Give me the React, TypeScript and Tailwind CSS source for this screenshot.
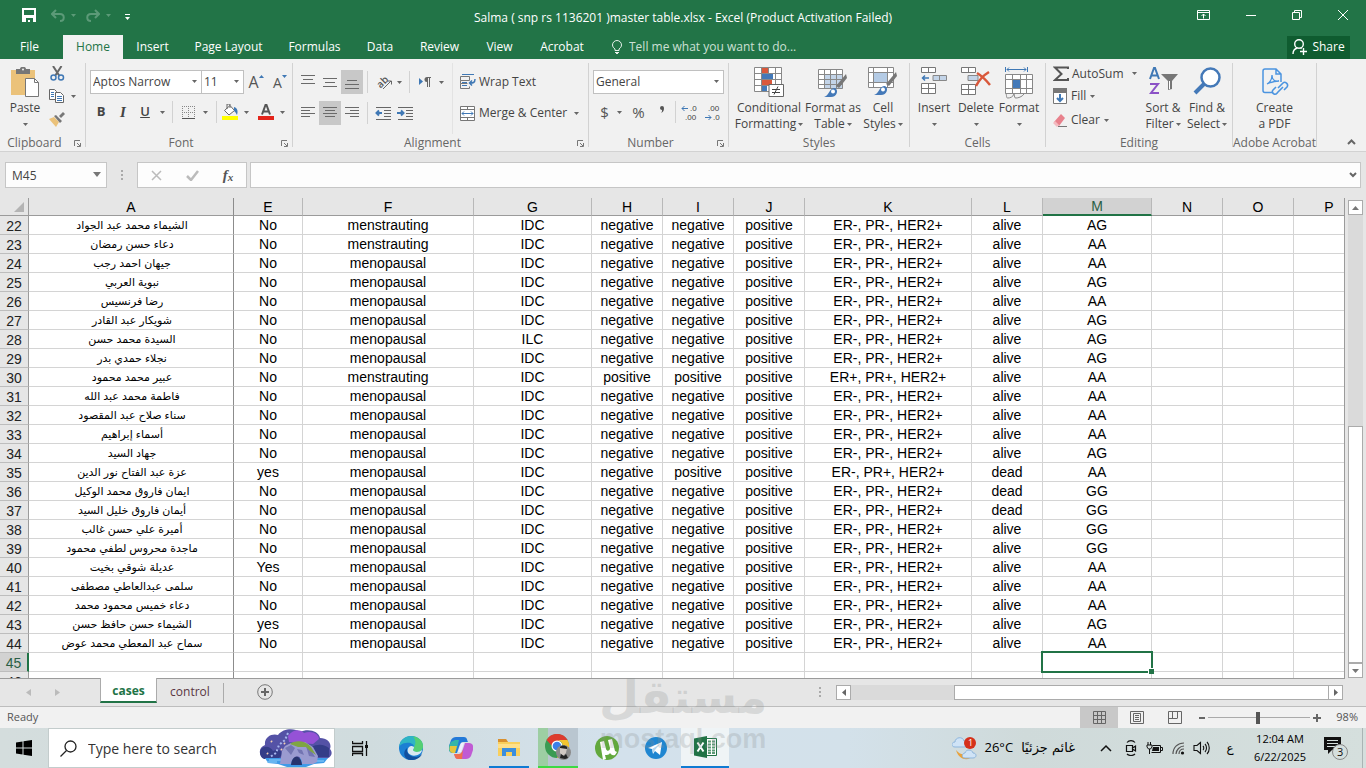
import React from 'react';
import clsx from 'clsx';

const columns = [
  { name: 'A', width: 'w-[205px]' },
  { name: 'E', width: 'w-[69px]' },
  { name: 'F', width: 'w-[171px]' },
  { name: 'G', width: 'w-[118px]' },
  { name: 'H', width: 'w-[71px]' },
  { name: 'I', width: 'w-[71px]' },
  { name: 'J', width: 'w-[71px]' },
  { name: 'K', width: 'w-[167px]' },
  { name: 'L', width: 'w-[71px]' },
  { name: 'M', width: 'w-[109px]' },
  { name: 'N', width: 'w-[71px]' },
  { name: 'O', width: 'w-[71px]' },
  { name: 'P', width: 'w-[71px]' },
];

const HER2 = 'ER-, PR-, HER2+';

// A, E, F, G, H, I, J, K, L, M
const rows: string[][] = [
  ['الشيماء محمد عبد الجواد', 'No', 'menstrauting', 'IDC', 'negative', 'negative', 'positive', HER2, 'alive', 'AG'],
  ['دعاء حسن رمضان', 'No', 'menstrauting', 'IDC', 'negative', 'negative', 'positive', HER2, 'alive', 'AA'],
  ['جيهان احمد رجب', 'No', 'menopausal', 'IDC', 'negative', 'negative', 'positive', HER2, 'alive', 'AA'],
  ['نبوية العربي', 'No', 'menopausal', 'IDC', 'negative', 'negative', 'positive', HER2, 'alive', 'AG'],
  ['رضا فرنسيس', 'No', 'menopausal', 'IDC', 'negative', 'negative', 'positive', HER2, 'alive', 'AA'],
  ['شويكار عبد القادر', 'No', 'menopausal', 'IDC', 'negative', 'negative', 'positive', HER2, 'alive', 'AG'],
  ['السيدة محمد حسن', 'No', 'menopausal', 'ILC', 'negative', 'negative', 'positive', HER2, 'alive', 'AG'],
  ['نجلاء حمدي بدر', 'No', 'menopausal', 'IDC', 'negative', 'negative', 'positive', HER2, 'alive', 'AG'],
  ['عبير محمد محمود', 'No', 'menstrauting', 'IDC', 'positive', 'positive', 'positive', 'ER+, PR+, HER2+', 'alive', 'AA'],
  ['فاطمة محمد عبد الله', 'No', 'menopausal', 'IDC', 'negative', 'negative', 'positive', HER2, 'alive', 'AA'],
  ['سناء صلاح عبد المقصود', 'No', 'menopausal', 'IDC', 'negative', 'negative', 'positive', HER2, 'alive', 'AA'],
  ['أسماء إبراهيم', 'No', 'menopausal', 'IDC', 'negative', 'negative', 'positive', HER2, 'alive', 'AA'],
  ['جهاد السيد', 'No', 'menopausal', 'IDC', 'negative', 'negative', 'positive', HER2, 'alive', 'AG'],
  ['عزة عبد الفتاح نور الدين', 'yes', 'menopausal', 'IDC', 'negative', 'positive', 'positive', 'ER-, PR+, HER2+', 'dead', 'AA'],
  ['ايمان فاروق محمد الوكيل', 'No', 'menopausal', 'IDC', 'negative', 'negative', 'positive', HER2, 'dead', 'GG'],
  ['أيمان فاروق خليل السيد', 'No', 'menopausal', 'IDC', 'negative', 'negative', 'positive', HER2, 'dead', 'GG'],
  ['أميرة علي حسن غالب', 'No', 'menopausal', 'IDC', 'negative', 'negative', 'positive', HER2, 'alive', 'GG'],
  ['ماجدة محروس لطفي محمود', 'No', 'menopausal', 'IDC', 'negative', 'negative', 'positive', HER2, 'alive', 'GG'],
  ['عديلة شوقي بخيت', 'Yes', 'menopausal', 'IDC', 'negative', 'negative', 'positive', HER2, 'alive', 'AA'],
  ['سلمى عبدالعاطي مصطفى', 'No', 'menopausal', 'IDC', 'negative', 'negative', 'positive', HER2, 'alive', 'AA'],
  ['دعاء خميس محمود محمد', 'No', 'menopausal', 'IDC', 'negative', 'negative', 'positive', HER2, 'alive', 'AA'],
  ['الشيماء حسن حافظ حسن', 'yes', 'menopausal', 'IDC', 'negative', 'negative', 'positive', HER2, 'alive', 'AG'],
  ['سماح عبد المعطي محمد عوض', 'No', 'menopausal', 'IDC', 'negative', 'negative', 'positive', HER2, 'alive', 'AA'],
  [],
  [],
];

const FIRST_ROW = 22;
const ACTIVE_ROW = 45;

interface IconProps {
  w: number;
  h: number;
  children: React.ReactNode;
}

function Icon({ w, h, children }: IconProps) {
  return (
    <svg width={w} height={h} viewBox={`0 0 ${w} ${h}`} fill="none" className="block shrink-0" aria-hidden="true">
      {children}
    </svg>
  );
}

function Caret({ color = '#666' }: { color?: string }) {
  return (
    <Icon w={5} h={3}>
      <path d="M0 0h5L2.500 3z" fill={color} />
    </Icon>
  );
}

function Btn({ label, className, children }: { label?: string; className?: string; children?: React.ReactNode }) {
  return (
    <button type="button" aria-label={label} className={clsx('flex shrink-0 items-center justify-center', className)}>
      {children}
    </button>
  );
}

function Sep() {
  return <div className="h-[22px] w-px shrink-0 bg-[#d2d2d2]" />;
}

function Group({ title, width, launcher, children }: { title: string; width: string; launcher?: boolean; children: React.ReactNode }) {
  return (
    <section className={clsx('flex h-[84px] shrink-0 flex-col border-r border-[#d2d2d2]', width)}>
      <div className="flex h-[71px] shrink-0">{children}</div>
      <div className="relative flex justify-center leading-[18px] text-[#666]">
        <span className={clsx(launcher && 'pr-4', 'whitespace-nowrap')}>{title}</span>
        {launcher && (
          <button type="button" aria-label={`${title} settings`} className="absolute right-1 top-[6px]">
            <Icon w={7} h={7}>
              <path d="M.5 6V.5H6M3 3l3 3M6.500 3v3.500H3" stroke="#777" />
            </Icon>
          </button>
        )}
      </div>
    </section>
  );
}

// Large ribbon button with the icon above one or two lines of text
function BigBtn({ icon, lines, width, caret = true }: { icon: React.ReactNode; lines: string[]; width: string; caret?: boolean }) {
  return (
    <button type="button" className={clsx('flex shrink-0 flex-col items-center pt-1 whitespace-nowrap', width)}>
      <span className="flex h-[33px] items-start">{icon}</span>
      <span className="leading-4">{lines[0]}</span>
      <span className="flex h-4 items-center gap-[2px] leading-4">
        {lines[1]}
        {caret && <Caret />}
      </span>
    </button>
  );
}

function Lines({ d }: { d: string }) {
  return (
    <Icon w={14} h={14}>
      <path d={d} stroke="#6a6a6a" />
    </Icon>
  );
}

function TitleBar() {
  return (
    <div className="grid h-[35px] grid-cols-[1fr_auto_1fr] items-center text-white">
      <div className="flex items-center pl-[22px] pb-[5px]">
        <Btn label="Save">
          <Icon w={14} h={14}>
            <path d="M0 0h14v14H0z" fill="#fff" />
            <path d="M2 2h10v5H2zM4 10h7v4H8v-2H6v2H4z" fill="#227447" />
          </Icon>
        </Btn>
        <Btn label="Undo" className="ml-[15px] gap-[6px]">
          <Icon w={14} h={13}>
            <path d="M5 1L1 5l4 4M1 5h8c5 0 5 7 0 7" stroke="#5c9a78" strokeWidth="2" />
          </Icon>
          <Caret color="#5c9a78" />
        </Btn>
        <Btn label="Redo" className="ml-[10px] gap-[6px]">
          <Icon w={14} h={13}>
            <path d="M9 1l4 4-4 4M13 5H5c-5 0-5 7 0 7" stroke="#5c9a78" strokeWidth="2" />
          </Icon>
          <Caret color="#5c9a78" />
        </Btn>
        <Btn label="Customize Quick Access Toolbar" className="ml-[14px] pt-1">
          <Icon w={5} h={6}>
            <path d="M0 0h5v1H0zM0 3h5L2.500 6z" fill="#fff" />
          </Icon>
        </Btn>
      </div>
      <h1 className="text-[12px]">Salma ( snp rs 1136201 )master table.xlsx - Excel (Product Activation Failed)</h1>
      <div className="flex items-center justify-end gap-9 pr-[18px] pb-[5px]">
        <Btn label="Ribbon Display Options">
          <Icon w={13} h={10}>
            <path d="M.5.5h12v9H.5zM.5 2.500h12M6.500 8.500V4M4.500 6l2-2 2 2" stroke="#fff" />
          </Icon>
        </Btn>
        <Btn label="Minimize">
          <Icon w={10} h={10}>
            <path d="M0 5.500h10" stroke="#fff" />
          </Icon>
        </Btn>
        <Btn label="Restore">
          <Icon w={10} h={10}>
            <path d="M.5 2.500h7v7h-7zM2.500 2V.5h7v7H8" stroke="#fff" />
          </Icon>
        </Btn>
        <Btn label="Close">
          <Icon w={10} h={10}>
            <path d="M0 0l10 10M10 0L0 10" stroke="#fff" />
          </Icon>
        </Btn>
      </div>
    </div>
  );
}

const tabs = [
  { name: 'Insert', width: 'w-[59px]' },
  { name: 'Page Layout', width: 'w-[93px]' },
  { name: 'Formulas', width: 'w-[79px]' },
  { name: 'Data', width: 'w-[52px]' },
  { name: 'Review', width: 'w-[67px]' },
  { name: 'View', width: 'w-[53px]' },
  { name: 'Acrobat', width: 'w-[72px]' },
];

function TabBar() {
  return (
    <nav className="flex h-6 items-center text-white">
      <button type="button" className="w-[63px] pr-1">File</button>
      <button type="button" className="h-6 w-[60px] bg-[#f1f1f1] text-[#227447]">Home</button>
      {tabs.map((tab) => (
        <button key={tab.name} type="button" className={clsx('shrink-0 whitespace-nowrap', tab.width)}>
          {tab.name}
        </button>
      ))}
      <label className="ml-[14px] flex flex-1 items-center gap-[7px]">
        <Icon w={10} h={14}>
          <path d="M3 10.500V9C1.500 8 .5 6.500.5 5a4.500 4.500 0 019 0c0 1.500-1 3-2.500 4v1.500zM3 12.500h4M4 13.500h2" stroke="#e6f0ea" />
        </Icon>
        <input
          type="text"
          aria-label="Tell me"
          placeholder="Tell me what you want to do..."
          className="w-[220px] bg-transparent outline-none placeholder:text-[#cde0d5]"
        />
      </label>
      <button type="button" className="mr-4 flex h-[23px] w-[63px] items-center justify-center gap-[5px] bg-[#0f5c30]">
        <Icon w={15} h={16}>
          <circle cx="7" cy="5" r="4.300" stroke="#fff" strokeWidth="1.400" />
          <path d="M1 15c0-4 2-5.500 4.500-6M8.500 9l1 .8M8 12.500h7M11.500 9v7" stroke="#fff" strokeWidth="1.400" />
        </Icon>
        Share
      </button>
    </nav>
  );
}

function ClipboardGroup() {
  return (
    <Group title="Clipboard" width="w-[86px]" launcher>
      <BigBtn
        width="ml-[1px] w-12"
        lines={['Paste', '']}
        icon={
          <Icon w={28} h={30}>
            <path d="M0 3h24v25H0z" fill="#ebc27a" />
            <path d="M5 2h4c0-3 6-3 6 0h4v5H5z" fill="#777" />
            <circle cx="12" cy="2.500" r="1" fill="#f1f1f1" />
            <path d="M14.500 11.500h9l4 4v14h-13z" fill="#fff" stroke="#777" />
            <path d="M23.500 11.500v4h4" stroke="#777" />
          </Icon>
        }
      />
      <div className="flex flex-col gap-[7px] pt-[2px]">
        <Btn label="Cut" className="h-4 w-4">
          <Icon w={15} h={15}>
            <path d="M3 0l6.500 10M11.500 0L5 10" stroke="#666" strokeWidth="2" />
            <circle cx="3.500" cy="11.500" r="2.500" stroke="#3f78b5" strokeWidth="1.500" />
            <circle cx="11" cy="11.500" r="2.500" stroke="#3f78b5" strokeWidth="1.500" />
          </Icon>
        </Btn>
        <Btn label="Copy" className="h-4 gap-[7px]">
          <Icon w={15} h={14}>
            <path d="M.5.5h5l2 2v8h-7z" fill="#fff" stroke="#666" />
            <path d="M6.500 3.500h5l3 3v7h-8z" fill="#fff" stroke="#666" />
            <path d="M2 3.500h3M2 5.500h3M2 7.500h3M8 7.500h5M8 9.500h5M8 11.500h5" stroke="#3f78b5" />
          </Icon>
          <Caret />
        </Btn>
        <Btn label="Format Painter" className="h-4 w-4">
          <Icon w={16} h={15}>
            <path d="M0 7l5-2 5 5-3 5z" fill="#ebc27a" />
            <path d="M5 4l2-1 6 6-2 2zM10 4l4-4 2 2-4 4z" fill="#777" />
          </Icon>
        </Btn>
      </div>
    </Group>
  );
}

function SelectBox({ label, value, width }: { label: string; value: string; width: string }) {
  return (
    <div className={clsx('relative h-6 shrink-0', width)}>
      <select aria-label={label} className="h-6 w-full appearance-none border border-[#c0c0c0] bg-white pl-[2px] text-[#444] outline-none">
        <option>{value}</option>
      </select>
      <span className="pointer-events-none absolute right-[5px] top-[10px]">
        <Caret />
      </span>
    </div>
  );
}

function FontGroup() {
  return (
    <Group title="Font" width="w-[207px]" launcher>
      <div className="flex flex-col gap-[7px] pl-1 pt-[7px]">
        <div className="flex items-center">
          <SelectBox label="Font" value="Aptos Narrow" width="w-28" />
          <SelectBox label="Font size" value="11" width="-ml-px w-[43px]" />
          <Btn label="Increase font size" className="w-6 text-[16px] text-[#555]">
            A
            <span className="pb-3">
              <Icon w={5} h={3}><path d="M2.500 0L5 3H0z" fill="#3f78b5" /></Icon>
            </span>
          </Btn>
          <Btn label="Decrease font size" className="w-6 text-[14px] text-[#555]">
            A
            <span className="pb-3">
              <Icon w={5} h={3}><path d="M0 0h5L2.500 3z" fill="#3f78b5" /></Icon>
            </span>
          </Btn>
        </div>
        <div className="flex h-[22px] items-center">
          <Btn label="Bold" className="w-[22px] text-[13px] font-bold">B</Btn>
          <Btn label="Italic" className="w-[22px] font-[Liberation_Serif] text-[15px] font-bold italic">I</Btn>
          <Btn label="Underline" className="w-[22px] text-[13px] font-semibold underline">U</Btn>
          <Btn label="Underline styles" className="w-3"><Caret /></Btn>
          <span className="w-1" />
          <Sep />
          <Btn label="Borders" className="w-[43px] gap-[8px]">
            <Icon w={13} h={13}>
              <path d="M0 .5h13M0 6.500h13M.5 0v13M6.500 0v13M12.500 0v13" stroke="#888" strokeDasharray="1 1" />
              <path d="M0 12.500h13" stroke="#555" />
            </Icon>
            <Caret />
          </Btn>
          <Sep />
          <Btn label="Fill Color" className="w-[37px] gap-[6px]">
            <Icon w={16} h={16}>
              <path d="M0 12h16v4H0z" fill="#ff0" />
              <path d="M8 1.500l4.500 5L7 11 2.500 6.500z" fill="#fff" stroke="#666" />
              <path d="M5 5V0h3v4" stroke="#666" />
              <path d="M12 3c4 1 4 5 3 8-1-1-1-3-3-4z" fill="#3f78b5" />
            </Icon>
            <Caret />
          </Btn>
          <Btn label="Font Color" className="w-[34px] gap-[6px]">
            <Icon w={16} h={16}>
              <path d="M0 12h16v4H0z" fill="#e3241b" />
              <path d="M4 10.500L7.500 1h1L12 10.500M5.500 7.500h5" stroke="#555" strokeWidth="2" />
            </Icon>
            <Caret />
          </Btn>
        </div>
      </div>
    </Group>
  );
}

function AlignmentGroup() {
  return (
    <Group title="Alignment" width="w-[296px]" launcher>
      <div className="flex flex-col gap-[7px] pl-1 pt-[7px]">
        <div className="flex h-6 items-center">
          <Btn label="Top Align" className="h-6 w-[22px]"><Lines d="M0 .5h14M2 4.500h10M0 8.500h14" /></Btn>
          <Btn label="Middle Align" className="h-6 w-[22px]"><Lines d="M0 3.500h14M2 7.500h10M0 11.500h14" /></Btn>
          <Btn label="Bottom Align" className="h-6 w-[22px] bg-[#c8c8c8]"><Lines d="M2 5.500h10M0 9.500h14M0 13.500h14" /></Btn>
          <span className="w-1" />
          <Sep />
          <Btn label="Orientation" className="w-[41px] gap-1">
            <Icon w={17} h={17}>
              <text x="1" y="12" fontSize="10" fill="#555" fontWeight="600" transform="rotate(-45 6 9)">ab</text>
              <path d="M7 15l8-8M12 7h3.500v3.500" stroke="#666" />
            </Icon>
            <Caret />
          </Btn>
          <Sep />
          <Btn label="Text direction" className="w-[42px] gap-2">
            <Icon w={12} h={10}>
              <path d="M0 1l4 3.500L0 8z" fill="#3f78b5" />
              <path d="M8 .5h4M8.500 0v10M10.500 0v10" stroke="#666" />
              <path d="M8 0a2.500 2.500 0 000 5z" fill="#666" />
            </Icon>
            <Caret />
          </Btn>
        </div>
        <div className="flex h-6 items-center">
          <Btn label="Align Left" className="h-6 w-[22px]"><Lines d="M0 1.500h14M0 4.500h9M0 7.500h14M0 10.500h9" /></Btn>
          <Btn label="Center" className="h-6 w-[22px] bg-[#c8c8c8]"><Lines d="M0 1.500h14M2 4.500h10M0 7.500h14M2 10.500h10" /></Btn>
          <Btn label="Align Right" className="h-6 w-[22px]"><Lines d="M0 1.500h14M5 4.500h9M0 7.500h14M5 10.500h9" /></Btn>
          <span className="w-1" />
          <Sep />
          <Btn label="Decrease Indent" className="w-[29px]">
            <Icon w={16} h={13}>
              <path d="M1 .5h15M9 3.500h7M9 6.500h7M9 9.500h7M1 12.500h15" stroke="#666" />
              <path d="M7 6H2.500M4 3.500L1.500 6 4 8.500" stroke="#3f78b5" strokeWidth="2" />
            </Icon>
          </Btn>
          <Btn label="Increase Indent" className="w-4">
            <Icon w={16} h={13}>
              <path d="M1 .5h15M9 3.500h7M9 6.500h7M9 9.500h7M1 12.500h15" stroke="#666" />
              <path d="M0 6h5M4 3.500L6.500 6 4 8.500" stroke="#3f78b5" strokeWidth="2" />
            </Icon>
          </Btn>
        </div>
      </div>
      <div className="ml-auto flex w-[136px] shrink-0 flex-col gap-[7px] border-l border-[#e3e3e3] pl-[7px] pt-[7px]">
        <button type="button" className="flex h-6 items-center gap-[3px] whitespace-nowrap">
          <Icon w={16} h={16}>
            <path d="M.5 2.500h9v4h-9zM.5 6.500v3h7M.5 9.500v5h9v-2" stroke="#777" />
            <path d="M2 .5h12M2 8.500h5M2 11.500h5" stroke="#3f78b5" />
            <path d="M15 5c0 4-2 4-5 4M12 6.500L9.500 9l2.500 2.500" stroke="#3f78b5" strokeWidth="1.500" />
          </Icon>
          Wrap Text
        </button>
        <button type="button" className="flex h-6 items-center gap-[3px] whitespace-nowrap">
          <Icon w={16} h={15}>
            <path d="M.5.5h14v14H.5zM.5 3.500h14M.5 11.500h14M7.500 0v3.500M7.500 11.500V15" fill="#fff" stroke="#777" />
            <path d="M2 7.500h11M4 5.500l-2 2 2 2M11 5.500l2 2-2 2" stroke="#3f78b5" />
          </Icon>
          Merge &amp; Center
          <span className="ml-1"><Caret /></span>
        </button>
      </div>
    </Group>
  );
}

// Two rows of small digits with a blue arrow beside the shorter row
function DecimalIcon({ increase }: { increase?: boolean }) {
  return (
    <svg width="18" height="20" viewBox="0 0 18 20" fill="none" aria-hidden="true" className="block shrink-0 font-[Liberation_Sans]">
      <path d={increase ? 'M1 6.500h6M3.500 4L1 6.500 3.500 9' : 'M1 15.500h6M4.500 13L7 15.500 4.500 18'} stroke="#3f78b5" />
      <text x={increase ? 9 : 4} y="9" fontSize="8" fill="#444">{increase ? '.0' : '.00'}</text>
      <text x={increase ? 4 : 9} y="18" fontSize="8" fill="#444">{increase ? '.00' : '.0'}</text>
    </svg>
  );
}

function NumberGroup() {
  return (
    <Group title="Number" width="w-[140px]" launcher>
      <div className="flex flex-col gap-[7px] pl-1 pt-[7px]">
        <SelectBox label="Number format" value="General" width="w-[131px]" />
        <div className="flex h-[22px] items-center text-[#555]">
          <Btn label="Accounting format" className="w-9 gap-2 text-[15px]">
            $<Caret />
          </Btn>
          <Btn label="Percent Style" className="w-[19px] text-[15px]">%</Btn>
          <Btn label="Comma Style" className="w-[27px]">
            <Icon w={6} h={14}>
              <path d="M1 3a2 2 0 114 0c0 3-1 4-3 5 1-1 1-2 1-3-1 0-2-1-2-2z" fill="#555" />
            </Icon>
          </Btn>
          <Sep />
          <Btn label="Increase Decimal" className="w-[28px]"><DecimalIcon increase /></Btn>
          <Btn label="Decrease Decimal" className="w-[18px]"><DecimalIcon /></Btn>
        </div>
      </div>
    </Group>
  );
}

function StylesGroup() {
  return (
    <Group title="Styles" width="w-[181px]">
      <BigBtn
        width="ml-1 w-[72px]"
        lines={['Conditional', 'Formatting']}
        icon={
          <Icon w={30} h={30}>
            <path d="M.5.5h27v24H.5z" fill="#fff" />
            <path d="M8 1h6v5H8zM8 13h10v6H8z" fill="#d9583b" />
            <path d="M8 7h11v5H8zM8 19h5v5H8z" fill="#4479b8" />
            <path d="M.5.5h27v24H.5zM.5 6.500h27M.5 12.500h27M.5 18.500h27M7.500 0v24M14.500 0v6M21.500 0v18" stroke="#888" />
            <path d="M15 17.500h14.500v12H15z" fill="#fff" stroke="#666" />
            <path d="M18 22.500h8M18 25.500h8M24 19.500l-4 8" stroke="#444" />
          </Icon>
        }
      />
      <BigBtn
        width="w-14"
        lines={['Format as', 'Table']}
        icon={
          <Icon w={30} h={30}>
            <path d="M.5 2.500h24v19H.5z" fill="#fff" />
            <path d="M6 8h19v14H6z" fill="#c3d4e8" />
            <path d="M.5 2.500h24v19H.5zM.5 7.500h24M.5 12.500h24M.5 17.500h24M6.500 2v20M12.500 2v20M18.500 2v20" stroke="#888" />
            <path d="M28 7l1 4-8 10-3-2z" fill="#777" />
            <path d="M6 30c5-1 5-9 11-9 4 2 2 9-4 9z" fill="#4479b8" />
            <circle cx="15" cy="24.500" r="2" fill="#fff" />
          </Icon>
        }
      />
      <BigBtn
        width="w-11"
        lines={['Cell', 'Styles']}
        icon={
          <Icon w={30} h={29}>
            <path d="M.5.5h25v20H.5z" fill="#fff" stroke="#888" />
            <path d="M6 6h13v10H6z" fill="#b4cbe5" />
            <path d="M.5 5.500h25M.5 15.500h25M5.500 0v20M19.500 0v20" stroke="#888" />
            <path d="M28 5l1 4-8 10-3-2z" fill="#777" />
            <path d="M6 28c5-1 5-9 11-9 4 2 2 9-4 9z" fill="#4479b8" />
            <circle cx="15" cy="22.500" r="2" fill="#fff" />
          </Icon>
        }
      />
    </Group>
  );
}

function CellsGroup() {
  return (
    <Group title="Cells" width="w-[136px]">
      <BigBtn
        width="ml-[3px] w-[42px]"
        lines={['Insert', '']}
        icon={
          <Icon w={26} h={28}>
            <path d="M.5.5h14v5H.5zM7.500 0v5.500M.5 16.500h14v10H.5zM7.500 16v11M.5 21.500h14" fill="#fff" stroke="#777" />
            <path d="M12 8.500h13.500v5H12zM18.500 8v6" fill="#c3d4e8" stroke="#888" />
            <path d="M8 11H2M4 8.500L1.500 11 4 13.500" stroke="#3f78b5" strokeWidth="1.500" />
          </Icon>
        }
      />
      <BigBtn
        width="w-[42px]"
        lines={['Delete', '']}
        icon={
          <Icon w={30} h={29}>
            <path d="M.5.5h14v5H.5zM7.500 0v5.500M.5 17.500h14v10H.5zM7.500 17v11M.5 22.500h14" fill="#fff" stroke="#777" />
            <path d="M7 8.500h10v5H7z" fill="#c3d4e8" stroke="#888" />
            <path d="M16 6c5 3 9 7 13 12M28 5c-5 3-10 8-13 14" stroke="#d9583b" strokeWidth="2.500" />
          </Icon>
        }
      />
      <BigBtn
        width="w-[44px]"
        lines={['Format', '']}
        icon={
          <Icon w={28} h={32}>
            <path d="M.5 0v5M22.500 0v5M2 2.500h19M4 .5l-2 2 2 2M19 .5l2 2-2 2" stroke="#3f78b5" />
            <path d="M.5 7.500h27v19H.5z" fill="#fff" />
            <path d="M8 12h8v10H8z" fill="#4479b8" />
            <path d="M.5 7.500h27v19H.5zM.5 12.500h27M.5 21.500h27M7.500 7v19M15.500 7v19M21.500 7v19M1 26c1 4 0 5 2 5s5-1 6-4c1 3 0 4 2 4s6-1 8-4" stroke="#888" />
          </Icon>
        }
      />
    </Group>
  );
}

function EditingGroup() {
  return (
    <Group title="Editing" width="w-[187px]">
      <div className="flex w-[95px] shrink-0 flex-col pl-[7px]">
        <button type="button" className="flex h-[21px] items-center gap-[3px] whitespace-nowrap">
          <Icon w={16} h={16}>
            <path d="M15 3V1.500H2L8.500 8 2 14h13v-2" stroke="#555" strokeWidth="2" />
          </Icon>
          AutoSum
          <span className="ml-auto pr-1"><Caret /></span>
        </button>
        <button type="button" className="flex h-6 items-center gap-1">
          <Icon w={14} h={16}>
            <path d="M.5.5h13v15H.5z" fill="#fff" stroke="#777" />
            <path d="M0 0h14v5H0z" fill="#777" />
            <path d="M7 6v7M4 10l3 3 3-3" stroke="#3f78b5" strokeWidth="2" />
          </Icon>
          Fill <Caret />
        </button>
        <button type="button" className="flex h-6 items-center gap-1">
          <Icon w={14} h={13}>
            <path d="M1 8l7-8 4 4-6 8z" fill="#e8818c" />
            <path d="M0 9l2-2 4 4-2 2z" fill="#f4b9bf" />
            <path d="M5 12.500h9" stroke="#777" />
          </Icon>
          Clear <Caret />
        </button>
      </div>
      <BigBtn
        width="w-[44px]"
        lines={['Sort &', 'Filter']}
        icon={
          <Icon w={29} h={28}>
            <path d="M1 12L5 1h1l4 11M2.500 8.500h6" stroke="#3f78b5" strokeWidth="2" />
            <path d="M1 17h8L2 26h8" stroke="#8c52c6" strokeWidth="2" />
            <path d="M12 7h17l-6 7v8l-4 1v-9z" fill="#777" />
            <path d="M20.500 14v8" stroke="#fff" />
          </Icon>
        }
      />
      <BigBtn
        width="w-[44px]"
        lines={['Find &', 'Select']}
        icon={
          <Icon w={28} h={28}>
            <circle cx="17.500" cy="10.500" r="9" fill="#fff" stroke="#4479b8" strokeWidth="2.500" />
            <path d="M11 17L2 26" stroke="#4479b8" strokeWidth="4" />
          </Icon>
        }
      />
    </Group>
  );
}

function AcrobatGroup() {
  return (
    <Group title="Adobe Acrobat" width="w-[84px]">
      <BigBtn
        width="w-full"
        lines={['Create', 'a PDF']}
        caret={false}
        icon={
          <Icon w={28} h={30}>
            <path d="M11 25.500H4a2 2 0 01-2-2V4a2 2 0 012-2h11l5 5v8M15 2v5h5" stroke="#4b94e0" strokeWidth="1.500" />
            <path d="M6 17c4-2 5-6 5-9M11 8c0 4 2 7 7 6-4 0-8 1-12 3" stroke="#4b94e0" strokeWidth="1.300" />
            <path d="M17 21l5-5c2-2 6 1 4 4l-3 3M22 20l-5 5c-1 1-2 3-4 2s-2-3-1-4l3-3" stroke="#4b94e0" strokeWidth="1.600" />
          </Icon>
        }
      />
    </Group>
  );
}

function Ribbon() {
  return (
    <div className="flex h-[93px] shrink-0 overflow-hidden border-b border-[#d2d2d2] bg-[#f1f1f1] pt-1 text-[#444]">
      <ClipboardGroup />
      <FontGroup />
      <AlignmentGroup />
      <NumberGroup />
      <StylesGroup />
      <CellsGroup />
      <EditingGroup />
      <AcrobatGroup />
      <div className="flex flex-1 items-end justify-end pb-[6px] pr-[10px]">
        <Btn label="Collapse the Ribbon">
          <Icon w={9} h={6}>
            <path d="M1 5l3.500-3.500L8 5" stroke="#666" strokeWidth="2" />
          </Icon>
        </Btn>
      </div>
    </div>
  );
}

function GripDots() {
  return (
    <Icon w={2} h={11}>
      <path d="M0 0h2v2H0zM0 4h2v2H0zM0 8h2v2H0z" fill="#aaa" />
    </Icon>
  );
}

function FormulaBar() {
  return (
    <div className="flex h-[46px] shrink-0 items-start pl-[5px] pr-[5px] pt-[10px]">
      <div className="relative w-[102px] shrink-0">
        <input aria-label="Name Box" defaultValue="M45" className="h-[26px] w-full border border-[#c6c6c6] bg-[#fdfdfd] pl-[6px] text-[#444] outline-none" />
        <button type="button" aria-label="Name list" className="absolute right-[6px] top-[10px]">
          <Icon w={8} h={5}><path d="M0 0h8L4 5z" fill="#777" /></Icon>
        </button>
      </div>
      <div className="flex h-[26px] w-[30px] shrink-0 items-center justify-center"><GripDots /></div>
      <div className="flex h-[26px] w-[110px] shrink-0 items-center border border-[#c6c6c6] bg-[#fdfdfd]">
        <Btn label="Cancel" className="w-9">
          <Icon w={11} h={11}><path d="M1 1l9 9M10 1l-9 9" stroke="#bbb" strokeWidth="1.500" /></Icon>
        </Btn>
        <Btn label="Enter" className="w-9">
          <Icon w={13} h={11}><path d="M1 6l4 4 7-9" stroke="#bbb" strokeWidth="2.500" /></Icon>
        </Btn>
        <Btn label="Insert Function" className="w-9 font-[Liberation_Serif] text-[15px] font-bold italic text-[#555]">
          f<span className="pt-1 text-[11px]">x</span>
        </Btn>
      </div>
      <div className="relative ml-[3px] flex-1">
        <input aria-label="Formula Bar" className="h-[26px] w-full border border-[#c6c6c6] bg-[#fdfdfd] px-1 outline-none" />
        <button type="button" aria-label="Expand Formula Bar" className="absolute right-1 top-[10px]">
          <Icon w={8} h={6}><path d="M1 1l3 3 3-3" stroke="#666" strokeWidth="2" /></Icon>
        </button>
      </div>
    </div>
  );
}

function Sheet() {
  return (
    <div className="flex min-h-0 flex-1">
      <div className="min-w-0 flex-1 overflow-hidden border-b border-r border-[#9b9b9b]">
        <table className="w-[1365px] table-fixed border-separate border-spacing-0 text-center font-[Liberation_Sans,DejaVu_Sans,sans-serif] text-[14px] leading-[18px] text-black">
          <thead>
            <tr className="bg-[#e6e6e6]">
              <th className="h-[18px] w-[29px] border-b border-r border-[#9b9b9b] p-0">
                <span className="flex justify-end pr-1">
                  <Icon w={10} h={10}><path d="M10 0v10H0z" fill="#b4b4b4" /></Icon>
                </span>
              </th>
              {columns.map((col) => (
                <th
                  key={col.name}
                  scope="col"
                  className={clsx(
                    'h-[18px] border-r p-0 font-normal leading-[16px]',
                    col.width,
                    col.name === 'M' ? 'border-b-2 border-b-[#217346] bg-[#d2d2d2] text-[#2a5f45]' : 'border-b border-b-[#9b9b9b]',
                    col.name === 'A' ? 'border-r-[#8c8c8c]' : 'border-r-[#b8b8b8]',
                  )}
                >
                  {col.name}
                </th>
              ))}
            </tr>
          </thead>
          <tbody>
            {rows.map((row, r) => {
              const rowNumber = FIRST_ROW + r;
              const active = rowNumber === ACTIVE_ROW;
              return (
                <tr key={rowNumber}>
                  <th
                    scope="row"
                    className={clsx(
                      'h-[19px] border-b border-b-[#bdbdbd] p-0 pt-[2px] font-normal leading-4',
                      active ? 'border-r-2 border-r-[#217346] bg-[#d2d2d2] text-[#2a5f45]' : 'border-r border-r-[#9b9b9b] bg-[#e6e6e6] text-[#222]',
                    )}
                  >
                    {rowNumber}
                  </th>
                  {columns.map((col, c) => (
                    <td
                      key={col.name}
                      dir={c === 0 ? 'rtl' : undefined}
                      className={clsx(
                        'h-[19px] whitespace-nowrap border-b border-r border-b-[#d4d4d4] bg-white p-0',
                        c === 0 ? 'border-r-[#8c8c8c] text-[11px]' : 'border-r-[#d4d4d4]',
                        active && col.name === 'M' && 'relative',
                      )}
                    >
                      {row[c]}
                      {active && col.name === 'M' && (
                        <div className="absolute -inset-[2px] z-10 border-2 border-[#217346]">
                          <div className="absolute -bottom-[3px] -right-[3px] h-[6px] w-[6px] border-l border-t border-white bg-[#217346]" />
                        </div>
                      )}
                    </td>
                  ))}
                </tr>
              );
            })}
          </tbody>
        </table>
      </div>
      <div className="flex w-[21px] shrink-0 flex-col items-center pb-[1px] pt-[2px]">
        <Btn label="Scroll up" className="h-[15px] w-[15px] border border-[#ababab] bg-white">
          <Icon w={7} h={4}><path d="M3.500 0L7 4H0z" fill="#777" /></Icon>
        </Btn>
        <div className="flex w-[15px] flex-1 flex-col justify-end bg-[#dadada]">
          <div className="h-[53%] border border-[#ababab] bg-white" />
        </div>
        <Btn label="Scroll down" className="h-[15px] w-[15px] border border-[#ababab] bg-white">
          <Icon w={7} h={4}><path d="M0 0h7L3.500 4z" fill="#777" /></Icon>
        </Btn>
      </div>
    </div>
  );
}

function SheetTabs() {
  return (
    <div className="flex h-7 shrink-0 items-start border-b border-[#bdbdbd] pr-[23px]">
      <div className="flex h-[26px] w-[100px] shrink-0 items-center gap-[24px] pl-[26px]">
        <Btn label="Previous sheet"><Icon w={5} h={7}><path d="M5 0v7L0 3.500z" fill="#bbb" /></Icon></Btn>
        <Btn label="Next sheet"><Icon w={5} h={7}><path d="M0 0v7l5-3.500z" fill="#bbb" /></Icon></Btn>
      </div>
      <button type="button" className="-mt-px h-[25px] w-[57px] shrink-0 border-x border-b-2 border-x-[#ababab] border-b-[#217346] bg-white pt-[2px] font-bold text-[#217346]">
        cases
      </button>
      <button type="button" className="h-[25px] w-[66px] shrink-0 text-[#5a3642]">control</button>
      <div className="mt-1 h-5 w-px bg-[#ababab]" />
      <Btn label="New sheet" className="ml-[33px] h-[25px]">
        <Icon w={16} h={16}>
          <circle cx="8" cy="8" r="7.300" stroke="#777" />
          <path d="M4 8h8M8 4v8" stroke="#666" strokeWidth="2" />
        </Icon>
      </Btn>
      <div className="ml-auto flex w-[524px] shrink-0 items-center pt-[6px]">
        <GripDots />
        <Btn label="Scroll left" className="ml-[15px] h-[15px] w-[15px] border border-[#ababab] bg-white">
          <Icon w={4} h={7}><path d="M4 0v7L0 3.500z" fill="#666" /></Icon>
        </Btn>
        <div className="flex h-[15px] flex-1 justify-end bg-[#dadada]">
          <div className="w-[374px] border-y border-l border-[#ababab] bg-white" />
        </div>
        <Btn label="Scroll right" className="h-[15px] w-[15px] border border-[#ababab] bg-white">
          <Icon w={4} h={7}><path d="M0 0v7l4-3.500z" fill="#666" /></Icon>
        </Btn>
      </div>
    </div>
  );
}

function StatusBar() {
  return (
    <div className="flex h-[21px] shrink-0 items-center bg-[#f1f1f1] pl-[7px] pr-2 text-[11px] text-[#555]">
      Ready
      <div className="ml-auto flex items-center">
        <Btn label="Normal view" className="h-[21px] w-[38px] bg-[#c8c8c8]">
          <Icon w={13} h={13}>
            <path d="M.5.5h12v12H.5zM.5 4.500h12M.5 8.500h12M4.500 0v12M8.500 0v12" stroke="#666" />
          </Icon>
        </Btn>
        <Btn label="Page Layout view" className="h-[21px] w-[38px]">
          <Icon w={14} h={13}>
            <path d="M.5.5h13v12H.5zM3.500 2.500h7v8h-7zM5 4.500h4M5 6.500h4M5 8.500h4" stroke="#666" />
          </Icon>
        </Btn>
        <Btn label="Page Break Preview" className="h-[21px] w-[38px]">
          <Icon w={14} h={13}>
            <path d="M.5.5h13v12H.5zM4.500 0v7M9.500 0v7M0 7.500h9.500" stroke="#666" />
          </Icon>
        </Btn>
        <Btn label="Zoom out" className="ml-[2px] w-[12px]"><Icon w={6} h={8}><path d="M0 4h6" stroke="#666" strokeWidth="2" /></Icon></Btn>
        <input
          type="range"
          aria-label="Zoom"
          min={0}
          max={100}
          defaultValue={49}
          className="h-3 w-[102px] appearance-none bg-[linear-gradient(#aaa,#aaa)] bg-[length:100%_1px] bg-center bg-no-repeat [&::-webkit-slider-thumb]:h-3 [&::-webkit-slider-thumb]:w-1 [&::-webkit-slider-thumb]:appearance-none [&::-webkit-slider-thumb]:bg-[#555]"
        />
        <Btn label="Zoom in" className="w-[14px]"><Icon w={8} h={8}><path d="M0 4h8M4 0v8" stroke="#666" strokeWidth="2" /></Icon></Btn>
        <button type="button" className="ml-[10px] w-6 text-right">98%</button>
      </div>
    </div>
  );
}

function SearchArt() {
  return (
    <Icon w={74} h={38}>
      <path d="M4 29C-1 25 0 18 6 16 5 8 13 4 19 6 24-1 36-1 41 3c8-4 19-1 20 6 8 0 12 6 10 11 4 5 0 10-6 10z" fill="#5452a6" />
      <path d="M29 7c6-8 13-6 16-3 8-3 15 1 15 6l-6 5-24-2z" fill="#9552d6" />
      <path d="M2 20c4-4 10-2 12 2 6-3 9 0 9 4l-4 4H5c-4-2-5-6-3-10zM52 18c8-4 14-2 18 1v9H54z" fill="#343d88" />
      <path d="M6 29h63l-4 5-10 1-8 3H28l-9-3-10-1z" fill="#3f9be8" />
      <path d="M10 31h12M56 32h9M8 33h10" stroke="#8fd0fa" />
      <path d="M21 35l2-13 3-5 6-3 14-1 8 5 5 9-1 6-4 2H43c0-10-9-10-11 0z" fill="#9a9bd0" />
      <path d="M26 19l6-3 4 3-4 7zM47 17l5 4 4 7-6-1zM38 20l5 1 2 5-5-2z" fill="#7375b2" />
      <path d="M31 15c5-4 15-4 21 3l5 8-6-4-4-4-8 0z" fill="#7fa542" />
      <path d="M32 36c1-11 10-11 11 0z" fill="#28346e" />
      <path d="M29 4l-3 7-6 5-3 8-6 4" stroke="#a8b6ee" strokeDasharray="2 2" strokeWidth="2" />
      <path d="M12 12l1 1M22 20l1 1M8 24l1 1M25 14l1 1" stroke="#f3cfb2" strokeWidth="2" />
    </Icon>
  );
}

function Taskbar() {
  return (
    <div className="flex h-10 shrink-0 items-center bg-[linear-gradient(90deg,#d4dddd_0%,#d0dcde_27%,#d3e1ec_45%,#d3e1ea_62%,#cfdada_75%,#d5dfdd_100%)] text-black">
      <Btn label="Start" className="h-10 w-12">
        <Icon w={16} h={16}>
          <path d="M0 2.500L6.500 1.500v6H0zM7.500 1.300L16 0v7.500H7.500zM0 8.500h6.500v6L0 13.500zM7.500 8.500H16V16l-8.500-1.300z" fill="#000" />
        </Icon>
      </Btn>
      <label className="flex h-10 w-[287px] shrink-0 items-center border border-[#c3cccc] bg-white pl-[11px]">
        <Icon w={17} h={17}>
          <circle cx="10.500" cy="6.500" r="5.500" stroke="#222" strokeWidth="1.300" />
          <path d="M6.500 10.500L.5 16.500" stroke="#222" strokeWidth="1.300" />
        </Icon>
        <input
          type="text"
          aria-label="Search"
          placeholder="Type here to search"
          className="ml-[11px] w-[171px] shrink-0 bg-transparent text-[14px] outline-none placeholder:text-[#333]"
        />
        <SearchArt />
      </label>
      <Btn label="Task View" className="h-10 w-[49px]">
        <Icon w={16} h={15}>
          <path d="M.5 0v2.500h10V0M.5 5.500h10v5H.5zM.5 15v-2.500h10V15M14.500 0v15" stroke="#111" strokeWidth="1.300" />
          <path d="M13 4h3v3h-3z" fill="#111" />
        </Icon>
      </Btn>
      <Btn label="Microsoft Edge" className="h-10 w-[54px]">
        <Icon w={24} h={24}>
          <circle cx="12" cy="12" r="12" fill="#1b7fd3" />
          <path d="M0 11C1 4 6 0 12 0c7 0 12 5 12 10 0 4-3 6-6 6s-4-1-4-2c1-1 1-2 1-3 0-3-4-5-8-4-3 0-6 2-7 4z" fill="#2fb5c4" />
          <path d="M14 .2C20 1 24 5 24 10c0 4-3 6-6 6s-4-1-4-2c1-1 1-2 1-3C17 8 17 4 14 .2z" fill="#55cf73" />
          <path d="M8 12c-1 6 4 9 9 9 2 0 4-1 6-3-2 4-6 6-11 6-7 0-9-8-4-12z" fill="#114f9e" />
          <path d="M15 11c0 2-1 2-1 3 0 2 6 3 9 0 0 4-7 7-11 5-5-2-4-8 0-9 1 0 2 0 3 1z" fill="#d9e8f0" />
        </Icon>
      </Btn>
      <Btn label="Copilot" className="h-10 w-[45px]">
        <Icon w={24} h={22}>
          <path d="M7 0h8c3 0 3 3 4 5h-5c-2 0-3 2-4 5l-2 6H4c-4 0-5-4-4-7l2-6c1-2 3-3 5-3z" fill="#2379d8" />
          <path d="M6 3h4l-2 8-2 5H4c-4 0-5-4-4-7l2-4z" fill="#35b6a8" />
          <path d="M1 9h7l-2 7H4c-3 0-4-3-3-7z" fill="#e7c53b" />
          <path d="M17 22H9c-3 0-3-3-4-5h5c2 0 3-2 4-5l2-6h4c4 0 5 4 4 7l-2 6c-1 2-3 3-5 3z" fill="#c05bd4" />
          <path d="M5 17h5c2 0 3-2 4-4l-1 9H9c-3 0-3-3-4-5z" fill="#f0704f" />
          <path d="M9 15l3-9h3l-3 9z" fill="#eef" />
        </Icon>
      </Btn>
      <Btn label="File Explorer" className="ml-[6px] h-10 w-10 border-b-2 border-[#0f7bd3]">
        <Icon w={22} h={19}>
          <path d="M0 1h8l2 3h12v14H0z" fill="#f9cf5c" />
          <path d="M0 1h8l2 3H0z" fill="#d9902f" />
          <path d="M0 6h22v4H0z" fill="#ffe08a" />
          <path d="M4 18v-8h14v8h-4v-4H8v4z" fill="#3b8ede" />
        </Icon>
      </Btn>
      <Btn label="Google Chrome" className="ml-[9px] h-10 w-10 border-b-2 border-[#3dd943] bg-[linear-gradient(90deg,#9dcea3_25%,#b9c6d0_25%)]">
        <Icon w={26} h={26}>
          <circle cx="12" cy="12" r="12" fill="#3a9b52" />
          <path d="M1.600 6A12 12 0 0122.500 6L12 7a5 5 0 00-5 5z" fill="#dd3b2f" />
          <path d="M12 24A12 12 0 0022.500 6H12a6 6 0 015 9z" fill="#f4c430" />
          <circle cx="12" cy="12" r="5.500" fill="#fff" />
          <circle cx="12" cy="12" r="4.300" fill="#3b80e8" />
          <circle cx="18.500" cy="18.500" r="7.500" fill="#8b8b8b" />
          <path d="M15 14c1-3 6-3 7 0l-1 5-3 3-3-3z" fill="#d0c8c2" />
          <path d="M15 13c2-2 5-2 7 0v2l-7-1zM16 20l3 2 2-2 2 4-3 1-5-1z" fill="#222" />
        </Icon>
      </Btn>
      <Btn label="uTorrent" className="h-10 w-[58px]">
        <Icon w={24} h={24}>
          <circle cx="12" cy="12" r="12" fill="#62a83d" />
          <path d="M5 6l4-1 2 8c1 3 4 2 4-1l-2-8 4-1 3 12 2 1-2 3c-3 1-4-1-5-2-1 2-3 2-5 2l1 4-3 1z" fill="#fff" />
        </Icon>
      </Btn>
      <Btn label="Telegram" className="h-10 w-[40px]">
        <Icon w={22} h={22}>
          <circle cx="11" cy="11" r="11" fill="#1f86d1" />
          <path d="M3 11l14-6-2 13-5-4-2 3-1-5z" fill="#fff" />
          <path d="M7 12l8-5-5 6-2 3z" fill="#b5d6ee" />
        </Icon>
      </Btn>
      <Btn label="Excel" className="ml-[5px] h-10 w-12 border-b-2 border-[#0f7bd3] bg-[#eff4f6]">
        <Icon w={23} h={22}>
          <path d="M12 2.500h10.500v17H12z" fill="#fff" stroke="#217346" />
          <path d="M14 5.500h3M18 5.500h3M14 8.500h3M18 8.500h3M14 11.500h3M18 11.500h3M14 14.500h3M18 14.500h3M14 17h3M18 17h3" stroke="#5b9a76" strokeWidth="2" />
          <path d="M0 2.500L13 0v22L0 19.500z" fill="#217346" />
          <path d="M3.500 6.500l6 9M9.500 6.500l-6 9" stroke="#fff" strokeWidth="2" />
        </Icon>
      </Btn>
      <div className="ml-auto flex h-10 items-center">
        <button type="button" className="flex items-center gap-2 whitespace-nowrap text-[13px]">
          <Icon w={25} h={23}>
            <path d="M4 13c4 5 9 6 13 1l4 5c-4 5-14 5-17-6z" fill="#e8a23c" />
            <path d="M3 10c-4 0-4-5 0-5 0-5 8-6 9-1 4 0 4 6 0 6z" fill="#cfe3f6" stroke="#8db5dc" />
            <path d="M13 21c-4 0-3-5 0-5 1-4 7-4 8 0 4 0 4 5 0 5z" fill="#cfe3f6" stroke="#8db5dc" />
            <circle cx="18" cy="6" r="6" fill="#d5301b" />
            <text x="16" y="9" fontSize="9" fill="#fff">1</text>
          </Icon>
          <span>26°C</span>
          <span dir="rtl" className="font-[DejaVu_Sans,sans-serif]">غائم جزئيًا</span>
        </button>
        <Btn label="Show hidden icons" className="ml-[25px]">
          <Icon w={12} h={8}><path d="M1 7l5-5 5 5" stroke="#111" strokeWidth="1.500" /></Icon>
        </Btn>
        <Btn label="Meet Now" className="ml-[13px]">
          <Icon w={12} h={16}>
            <path d="M1.500 5.500h6v6h-6zM7.500 8l3-2v5l-3-2M2 2.500C4 0 8 0 10 2.500M2 14c2 2 6 2 8 0" stroke="#111" strokeWidth="1.200" />
          </Icon>
        </Btn>
        <Btn label="Battery" className="ml-[9px]">
          <Icon w={17} h={13}>
            <path d="M2 0v3M4.500 0v3M1 3h5v2L4.500 7h-2L1 5zM3.500 7v5" stroke="#111" />
            <path d="M6.500 3.500h8v7h-9M15 5.500h1.500v3H15" stroke="#111" />
            <path d="M7 5h6v4H6z" fill="#111" />
          </Icon>
        </Btn>
        <Btn label="Network" className="ml-[9px]">
          <Icon w={13} h={13}>
            <path d="M1 12C1 5 6 1 12 1M4 12c0-4 4-8 8-8M7 12c0-3 2-5 5-5" stroke="#555" strokeWidth="1.200" />
            <circle cx="10.500" cy="11" r="1.600" fill="#111" />
          </Icon>
        </Btn>
        <Btn label="Volume" className="ml-[8px]">
          <Icon w={17} h={14}>
            <path d="M1 4.500h3l3.500-3v11L4 9.500H1zM10 5c1 1 1 3 0 4M12 3c2 2 2 6 0 8M14 1c3 3 3 9 0 12" stroke="#111" strokeWidth="1.100" />
          </Icon>
        </Btn>
        <button type="button" className="ml-3 w-4 font-[DejaVu_Sans,sans-serif]">ع</button>
        <button type="button" className="ml-3 w-[60px] whitespace-nowrap text-center text-[11px] leading-[18px]">
          12:04 AM
          <br />
          6/22/2025
        </button>
        <button type="button" aria-label="Notifications" className="relative ml-[14px] mr-[13px]">
          <Icon w={25} h={24}>
            <path d="M0 1h17v13H8l-4 4v-4H0z" fill="#111" />
            <path d="M3 4.500h11M3 7.500h11M3 10.500h8" stroke="#d5dfdd" />
            <circle cx="16" cy="16" r="7.500" fill="#d5dfdd" stroke="#888" />
            <text x="13" y="20" fontSize="11" fill="#111">3</text>
          </Icon>
        </button>
        <div className="h-10 w-1 border-l border-[#aab4b4]" />
      </div>
    </div>
  );
}

function Watermark() {
  return (
    <div className="pointer-events-none absolute bottom-[14px] left-1/2 z-20 flex w-[164px] -translate-x-[82px] flex-col items-center whitespace-nowrap text-[#8a8f8f]/25">
      <span dir="rtl" className="font-[DejaVu_Sans,sans-serif] text-[46px] font-bold leading-[54px]">مستقل</span>
      <span className="font-[Liberation_Sans,sans-serif] text-[27px] font-bold leading-[30px]">mostaql.com</span>
    </div>
  );
}

export default function App() {
  return (
    <div className="relative flex h-screen flex-col overflow-hidden bg-[#e6e6e6] font-[Open_Sans,sans-serif] text-[12px]">
      <header className="shrink-0 bg-[#227447]">
        <TitleBar />
        <TabBar />
      </header>
      <Ribbon />
      <FormulaBar />
      <Sheet />
      <SheetTabs />
      <StatusBar />
      <Taskbar />
      <Watermark />
    </div>
  );
}
